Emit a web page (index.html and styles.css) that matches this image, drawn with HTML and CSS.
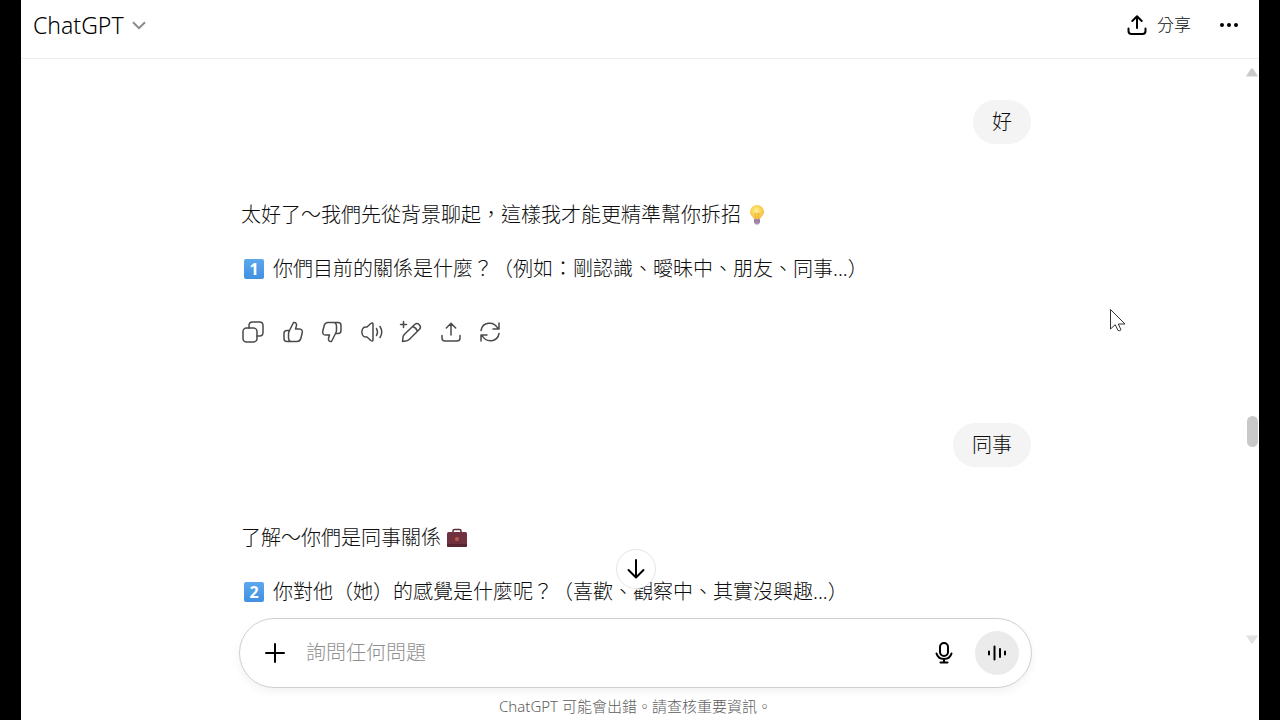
FILE: index.html
```html
<!DOCTYPE html>
<html lang="zh-Hant">
<head>
    <meta charset="UTF-8">
    <meta name="viewport" content="width=device-width, initial-scale=1.0">
    <title>ChatGPT</title>
    <link rel="stylesheet" href="styles.css">
</head>
<body>
    <div class="app">
        <header class="header">
            <button class="model-btn">
                ChatGPT
                <svg class="chevron" viewBox="0 0 14 14"><path d="M1 4.2l6 6 6-6"/></svg>
            </button>
            <div class="header-actions">
                <button class="share-btn">
                    <svg class="icon bold" viewBox="0 0 22 22"><path d="M11 14V2.5M6.3 7L11 2.300l4.700 4.700M2.500 14.500v2.500q0 3 3 3h11q3 0 3-3v-2.500"/></svg>
                    分享
                </button>
                <button class="more-btn" aria-label="更多">
                    <svg class="dots" viewBox="0 0 22 22"><circle cx="4" cy="11" r="2"/><circle cx="11" cy="11" r="2"/><circle cx="18" cy="11" r="2"/></svg>
                </button>
            </div>
        </header>

        <div class="body">
            <div class="column">
                <main class="thread">
                    <div class="bubble">好</div>

                    <div class="answer">
                        <p>太好了～我們先從背景聊起，這樣我才能更精準幫你拆招
                            <svg class="emoji" viewBox="0 0 22 22" role="img" aria-label="燈泡">
                                <defs>
                                    <radialGradient id="bulb" cx="45%" cy="40%" r="60%">
                                        <stop offset="0" stop-color="#fff0a0"/>
                                        <stop offset="0.5" stop-color="#fbd75a"/>
                                        <stop offset="1" stop-color="#f3b840"/>
                                    </radialGradient>
                                </defs>
                                <path fill="url(#bulb)" d="M11 1a7 7 0 0 0-7 7c0 3.500 3.500 4.500 4 7.500h6c.500-3 4-4 4-7.500A7 7 0 0 0 11 1z"/>
                                <path fill="none" stroke="#efb23c" d="M10 15l-1-6 2 1.500L13 9l-1 6"/>
                                <path fill="#a88faf" d="M8 15h6v3.500l-1.500 2h-3L8 18.500z"/>
                                <path fill="none" stroke="#8a7195" d="M8 17h6"/>
                            </svg>
                        </p>
                        <p><span class="keycap">1</span>你們目前的關係是什麼？（例如：剛認識、曖昧中、朋友、同事...）</p>
                    </div>

                    <div class="actions">
                        <button aria-label="複製"><svg class="icon" viewBox="0 0 22 22"><rect x="1" y="7" width="14" height="14" rx="3.500"/><path d="M7 7V4.500Q7 1 10.500 1H17.500Q21 1 21 4.500V11.500Q21 15 17.500 15H15"/></svg></button>
                        <button aria-label="讚"><svg class="icon" viewBox="0 0 22 22"><path d="M7.500 9.500L11.500 1.500C14 1 15 3 14.400 5L13.500 8H17.500C20 8 20.700 10 20.200 12L18.800 17.500Q18 20.500 15 20.500H5Q2 20.500 2 17.500V12.500Q2 9.500 5 9.500H7.500ZM7.500 9.500Q6.500 11 6.500 13V17Q6.500 19.500 8.500 20.500"/></svg></button>
                        <button aria-label="倒讚"><svg class="icon" viewBox="0 0 22 22"><path d="M14.500 12.500L10.500 20.500C8 21 7 19 7.600 17L8.500 14H4.500C2 14 1.300 12 1.800 10L3.200 4.500Q4 1.500 7 1.500H17Q20 1.500 20 4.500V9.500Q20 12.500 17 12.500H14.500ZM14.500 12.500Q15.500 11 15.500 9V5Q15.500 2.500 13.500 1.500"/></svg></button>
                        <button aria-label="朗讀"><svg class="icon" viewBox="0 0 22 22"><path d="M12 3.500V18.500Q12 21 9.800 19.500L6 16H4.500Q2.500 16 1.500 14Q0 11 1.500 8Q2.500 6 4.500 6H6L9.800 2.500Q12 1 12 3.500ZM15.500 7.500Q17.500 11 15.500 14.500M19 5.500Q22.500 11 19 16.500"/></svg></button>
                        <button aria-label="編輯"><svg class="icon" viewBox="0 0 22 22"><path d="M2.500 20.500L3 16Q3.200 14.500 4.500 13.200L14.700 3.500Q17 1.500 19.300 3.700Q21.500 6 19.500 8.300L9.500 18.300Q8.300 19.500 6.800 19.800ZM12.500 5.500Q16 6.500 17.500 10.200M3.500 .500V6.500M.500 3.500H6.500"/></svg></button>
                        <button aria-label="分享"><svg class="icon" viewBox="0 0 22 22"><path d="M11 14V2.500M6.300 7L11 2.300l4.700 4.700M2 14.500v2.500q0 3 3 3h12q3 0 3-3v-2.500"/></svg></button>
                        <button aria-label="重新產生"><svg class="icon" viewBox="0 0 22 22"><path d="M2 9.500C3.500 1 14.500-.500 19 7.500M20 2V8H14M20 12.500C18.500 21 7.500 22.500 3 14.500M2 20V14H8"/></svg></button>
                    </div>

                    <div class="bubble">同事</div>

                    <div class="answer">
                        <p>了解～你們是同事關係
                            <svg class="emoji" viewBox="0 0 22 22" role="img" aria-label="公事包">
                                <path fill="none" stroke="#57303b" stroke-width="1.500" d="M7 6V4q0-1.500 1.500-1.500h5Q15 2.500 15 4v2"/>
                                <rect x="1" y="5" width="20" height="15" rx="1.500" fill="#70323f"/>
                                <path fill="#572632" d="M1 17h20v1.500q0 1.500-1.500 1.500h-17Q1 20 1 18.500z"/>
                                <circle cx="11" cy="12" r="2" fill="#bd5b4b"/>
                            </svg>
                        </p>
                        <p><span class="keycap">2</span>你對他（她）的感覺是什麼呢？（喜歡、觀察中、其實沒興趣...）</p>
                    </div>
                </main>

                <footer class="footer">
                    <button class="down-btn" aria-label="捲動到底部">
                        <svg class="icon bold" viewBox="0 0 22 22"><path d="M11 2v17M3.500 12l7.500 7.500 7.500-7.500"/></svg>
                    </button>
                    <form class="composer">
                        <button type="button" aria-label="新增"><svg class="icon bold" viewBox="0 0 22 22"><path d="M11 2v18M2 11h18"/></svg></button>
                        <input type="text" placeholder="詢問任何問題" aria-label="詢問任何問題">
                        <button type="button" aria-label="語音輸入"><svg class="icon bold" viewBox="0 0 22 22"><rect x="7" y="1" width="8" height="13" rx="4"/><path d="M3.500 11.500Q5 17 11 17t7.500-5.500M11 17v3.500M7.500 20.500h7"/></svg></button>
                        <button type="button" class="voice-btn" aria-label="語音模式"><svg class="icon voice" viewBox="0 0 22 22"><path d="M3 9.500v3M8.500 4.500v13M14 7v8M19 9.500v3"/></svg></button>
                    </form>
                    <p class="note">ChatGPT 可能會出錯。請查核重要資訊。</p>
                </footer>
            </div>

            <div class="scrollbar">
                <svg class="arrow" viewBox="0 0 12 9"><path d="M5 .800q1-1 2 0L11.500 7.500q.300 1-.700 1H1.200q-1 0-.700-1z"/></svg>
                <div class="thumb"></div>
                <svg class="arrow faded" viewBox="0 0 12 9"><path d="M0 .500h12L7 8q-1 1-2 0z"/></svg>
            </div>
        </div>
    </div>

    <svg class="cursor" viewBox="0 0 16 23"><path d="M.500 .500V20l4.700-4.300L8 21.500q1.500 .800 3-.700L8.300 15h6.700z"/></svg>
</body>
</html>
```
FILE: styles.css
```css
* {
    box-sizing: border-box;
}
body {
    margin: 0;
    padding: 0 21px;
    background: #000;
    color: #0d0d0d;
    font-family: "Noto Sans", "Noto Sans CJK TC", sans-serif;
    font-size: 20px;
    font-weight: 300;
    line-height: 32px;
}
button {
    display: flex;
    align-items: center;
    justify-content: center;
    padding: 0;
    border: none;
    background: none;
    color: inherit;
    font: inherit;
    cursor: pointer;
}
p {
    margin: 0;
}
.app {
    display: flex;
    flex-direction: column;
    height: 100vh;
    background: #fff;
}

/* Header */
.header {
    display: flex;
    align-items: center;
    justify-content: space-between;
    height: 59px;
    padding: 0 19px 8px 12px;
    border-bottom: 1px solid #ededed;
}
.model-btn {
    gap: 8px;
    font-size: 23px;
    color: #000;
}
.chevron {
    width: 14px;
    height: 14px;
    fill: none;
    stroke: #8a8a8a;
    stroke-width: 2;
}
.header-actions {
    display: flex;
    align-items: center;
    gap: 27px;
}
.share-btn {
    gap: 9px;
    font-size: 17px;
}
.dots {
    width: 22px;
    height: 22px;
}

/* Icons */
.icon {
    width: 22px;
    height: 22px;
    flex: none;
    fill: none;
    stroke: currentColor;
    stroke-width: 1.5;
    stroke-linecap: round;
    stroke-linejoin: round;
    overflow: visible;
}
.bold {
    stroke: #000;
    stroke-width: 2;
}

/* Conversation */
.body {
    display: flex;
    flex: 1;
    min-height: 0;
}
.column {
    display: flex;
    flex: 1;
    flex-direction: column;
    align-items: center;
    padding-left: 5px;
}
.thread {
    display: flex;
    flex: 1;
    flex-direction: column;
    width: 100%;
    max-width: 791px;
    min-height: 0;
    padding: 41px 0 0 1px;
    overflow: hidden;
}
.bubble {
    align-self: flex-end;
    padding: 6px 19px;
    border-radius: 22px;
    background: #f4f4f4;
}
.answer {
    display: flex;
    flex-direction: column;
    gap: 22px;
    margin-top: 55px;
}
.emoji {
    width: 22px;
    height: 22px;
    vertical-align: -4px;
}
.keycap {
    display: inline-block;
    width: 20px;
    height: 20px;
    margin: 0 9px 0 3px;
    border-radius: 2px;
    background: linear-gradient(#5ba8ee, #4291e0);
    color: #fff;
    font-size: 16px;
    font-weight: 700;
    line-height: 20px;
    text-align: center;
    vertical-align: 1px;
}
.actions {
    display: flex;
    justify-content: space-between;
    width: 259px;
    margin: 36px 0 80px 1px;
    color: #4a4a4a;
}

/* Composer */
.footer {
    position: relative;
    width: 100%;
    max-width: 793px;
}
.down-btn {
    position: absolute;
    left: calc(50% - 20px);
    bottom: 131px;
    width: 40px;
    height: 40px;
    border: 1px solid #e5e5e5;
    border-radius: 50%;
    background: #fff;
}
.composer {
    display: flex;
    align-items: center;
    gap: 20px;
    height: 70px;
    padding: 0 12px 0 24px;
    border: 1px solid #cfcfcf;
    border-radius: 36px;
    background: #fff;
    box-shadow: 0 4px 8px rgba(0, 0, 0, 0.05);
}
.composer input {
    flex: 1;
    min-width: 0;
    padding: 0;
    border: none;
    outline: none;
    background: none;
    font: inherit;
}
.composer input::placeholder {
    color: #8f8f8f;
}
.voice-btn {
    width: 44px;
    height: 44px;
    border-radius: 50%;
    background: #ebebeb;
}
.voice {
    stroke: #000;
    stroke-width: 2;
}
.note {
    padding: 7px 0 2px;
    color: #5d5d5d;
    font-size: 15px;
    line-height: 23px;
    text-align: center;
}

/* Scrollbar */
.scrollbar {
    display: flex;
    flex-direction: column;
    align-items: center;
    width: 14px;
    margin-bottom: 76px;
    padding-top: 9px;
}
.arrow {
    width: 12px;
    height: 9px;
    fill: #c9c9c9;
}
.faded {
    margin-top: auto;
    fill: #e2e2e2;
}
.thumb {
    width: 11px;
    height: 31px;
    margin-top: 339px;
    border-radius: 6px;
    background: #c9c9c9;
}

.cursor {
    position: absolute;
    top: 309px;
    left: 1110px;
    width: 16px;
    height: 23px;
    fill: #fff;
    stroke: #333;
}
```
